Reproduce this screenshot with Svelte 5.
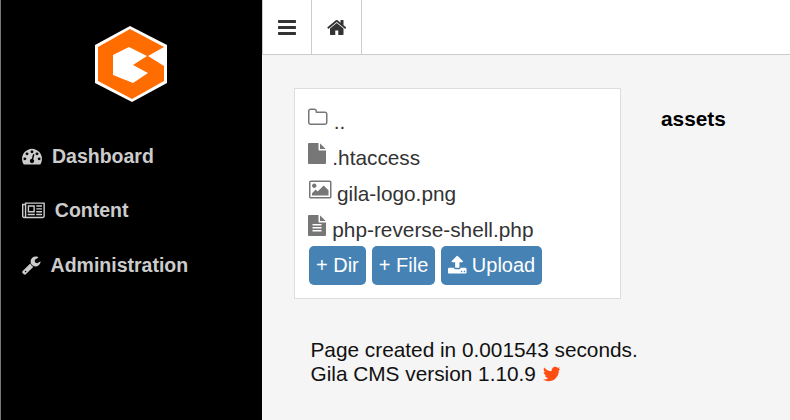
<script>
  const icons = {
    bars: 'M1664 1344v128q0 26-19 45t-45 19h-1408q-26 0-45-19t-19-45v-128q0-26 19-45t45-19h1408q26 0 45 19t19 45zm0-512v128q0 26-19 45t-45 19h-1408q-26 0-45-19t-19-45v-128q0-26 19-45t45-19h1408q26 0 45 19t19 45zm0-512v128q0 26-19 45t-45 19h-1408q-26 0-45-19t-19-45v-128q0-26 19-45t45-19h1408q26 0 45 19t19 45z',
    home: 'M1472 992v480q0 26-19 45t-45 19h-384v-384h-256v384h-384q-26 0-45-19t-19-45v-480q0-1 .5-3t.5-3l575-474 575 474q1 2 1 6zm223-69l-62 74q-8 9-21 11h-3q-13 0-21-7l-692-577-692 577q-12 8-24 7-13-2-21-11l-62-74q-8-10-7-23.5t11-21.5l719-599q32-26 76-26t76 26l244 204v-195q0-14 9-23t23-9h192q14 0 23 9t9 23v408l219 182q10 8 11 21.5t-7 23.5z',
    gauge: 'M384 1152q0-53-37.5-90.5t-90.5-37.5-90.5 37.5-37.5 90.5 37.5 90.5 90.5 37.5 90.5-37.5 37.5-90.5zm192-448q0-53-37.5-90.5t-90.5-37.5-90.5 37.5-37.5 90.5 37.5 90.5 90.5 37.5 90.5-37.5 37.5-90.5zm428 481l101-382q6-26-7.5-48.5t-38.5-29.5-48 6.5-30 39.5l-101 382q-60 5-107 43.5t-63 98.5q-20 77 20 146t117 89 146-20 89-117q16-60-6-117t-72-91zm660-33q0-53-37.5-90.5t-90.5-37.5-90.5 37.5-37.5 90.5 37.5 90.5 90.5 37.5 90.5-37.5 37.5-90.5zm-640-640q0-53-37.5-90.5t-90.5-37.5-90.5 37.5-37.5 90.5 37.5 90.5 90.5 37.5 90.5-37.5 37.5-90.5zm448 192q0-53-37.5-90.5t-90.5-37.5-90.5 37.5-37.5 90.5 37.5 90.5 90.5 37.5 90.5-37.5 37.5-90.5zm320 448q0 261-141 483-19 29-54 29h-1402q-35 0-54-29-141-221-141-483 0-182 71-348t191-286 286-191 348-71 348 71 286 191 191 286 71 348z',
    news: 'M1024 512h-384v384h384v-384zm128 640v128h-640v-128h640zm0-768v640h-640v-640h640zm640 768v128h-512v-128h512zm0-256v128h-512v-128h512zm0-256v128h-512v-128h512zm0-256v128h-512v-128h512zm-1536 960v-960h-128v960q0 26 19 45t45 19 45-19 19-45zm1664 0v-1088h-1536v1088q0 33-11 64h1483q26 0 45-19t19-45zm128-1216v1216q0 80-56 136t-136 56h-1664q-80 0-136-56t-56-136v-1088h256v-128h1792z',
    wrench: 'M448 1472q0-26-19-45t-45-19-45 19-19 45 19 45 45 19 45-19 19-45zm644-420l-682 682q-37 37-90 37-52 0-91-37l-106-108q-38-36-38-90 0-53 38-91l681-681q39 98 114.5 173.5t173.5 114.5zm634-435q0 39-23 106-47 134-164.5 217.5t-258.5 83.5q-185 0-316.5-131.5t-131.5-316.5 131.5-316.5 316.5-131.5q58 0 121.5 16.5t107.5 46.5q16 11 16 28t-16 28l-293 169v224l193 107q5-3 79-48.5t135.5-81 70.5-35.5q15 0 23.5 10t8.5 25z',
    folder: 'M1600 1312v-704q0-40-28-68t-68-28h-704q-40 0-68-28t-28-68v-64q0-40-28-68t-68-28h-320q-40 0-68 28t-28 68v960q0 40 28 68t68 28h1216q40 0 68-28t28-68zm128-704v704q0 92-66 158t-158 66h-1216q-92 0-158-66t-66-158v-960q0-92 66-158t158-66h320q92 0 158 66t66 158v32h672q92 0 158 66t66 158z',
    file: 'M1152 512v-472q22 14 36 28l408 408q14 14 28 36h-472zm-128 32q0 40 28 68t68 28h544v1056q0 40-28 68t-68 28h-1344q-40 0-68-28t-28-68v-1600q0-40 28-68t68-28h800v544z',
    image: 'M576 576q0 80-56 136t-136 56-136-56-56-136 56-136 136-56 136 56 56 136zm1024 384v448h-1408v-192l320-320 160 160 512-512zm96-704h-1600q-13 0-22.5 9.5t-9.5 22.5v1216q0 13 9.5 22.5t22.5 9.5h1600q13 0 22.5-9.5t9.5-22.5v-1216q0-13-9.5-22.5t-22.5-9.5zm160 32v1216q0 66-47 113t-113 47h-1600q-66 0-113-47t-47-113v-1216q0-66 47-113t113-47h1600q66 0 113 47t47 113z',
    filetext: 'M1596 476q14 14 28 36h-472v-472q22 14 36 28zm-476 164h544v1056q0 40-28 68t-68 28h-1344q-40 0-68-28t-28-68v-1600q0-40 28-68t68-28h800v544q0 40 28 68t68 28zm160 736v-64q0-14-9-23t-23-9h-704q-14 0-23 9t-9 23v64q0 14 9 23t23 9h704q14 0 23-9t9-23zm0-256v-64q0-14-9-23t-23-9h-704q-14 0-23 9t-9 23v64q0 14 9 23t23 9h704q14 0 23-9t9-23zm0-256v-64q0-14-9-23t-23-9h-704q-14 0-23 9t-9 23v64q0 14 9 23t23 9h704q14 0 23-9t9-23z',
    upload: 'M1344 1472q0-26-19-45t-45-19-45 19-19 45 19 45 45 19 45-19 19-45zm256 0q0-26-19-45t-45-19-45 19-19 45 19 45 45 19 45-19 19-45zm128-224v320q0 40-28 68t-68 28h-1472q-40 0-68-28t-28-68v-320q0-40 28-68t68-28h427q21 56 70.5 92t110.5 36h256q61 0 110.5-36t70.5-92h427q40 0 68 28t28 68zm-325-648q-17 40-59 40h-256v448q0 26-19 45t-45 19h-256q-26 0-45-19t-19-45v-448h-256q-42 0-59-40-17-39 14-69l448-448q18-19 45-19t45 19l448 448q31 30 14 69z',
    twitter: 'M1684 408q-67 98-162 167 1 14 1 42 0 130-38 259.5t-115.5 248.5-184.5 210.5-258 146-323 54.5q-271 0-496-145 35 4 76 4 225 0 401-138-105-2-188-64.5t-114-159.5q33 5 61 5 43 0 85-11-112-23-185.5-111.5t-73.5-205.5v-4q68 38 146 41-66-44-105-115t-39-154q0-88 44-163 121 149 294.5 238.5t371.5 99.5q-8-38-8-74 0-134 94.5-228.5t228.5-94.5q140 0 236 102 109-21 205-78-37 115-142 178 84-9 173-47z'
  };

  // horizontal extent of each glyph in font units, the height is always 1792
  const extent = {
    bars: [128, 1536],
    home: [64, 1664],
    gauge: [0, 1792],
    news: [0, 2048],
    wrench: [64, 1664],
    folder: [64, 1664],
    file: [128, 1536],
    image: [-64, 1920],
    filetext: [128, 1536],
    upload: [64, 1664],
    twitter: [108, 1576]
  };

  const menu = [
    { icon: 'gauge', label: 'Dashboard' },
    { icon: 'news', label: 'Content' },
    { icon: 'wrench', label: 'Administration' }
  ];

  const files = [
    { icon: 'folder', name: '..', cls: 'up' },
    { icon: 'file', name: '.htaccess', cls: '' },
    { icon: 'image', name: 'gila-logo.png', cls: 'pic' },
    { icon: 'filetext', name: 'php-reverse-shell.php', cls: '' }
  ];
</script>

{#snippet fa(name, size, cls)}
  <svg
    class={cls}
    width={(extent[name][1] * size) / 1792}
    height={size}
    viewBox="{extent[name][0]} 0 {extent[name][1]} 1792"
    fill="currentColor"
  >
    <path d={icons[name]} />
  </svg>
{/snippet}

<div class="page">
  <aside>
    <svg class="logo" width="74" height="78" viewBox="94 25 74 78">
      <polygon points="130,26 167,45 167,83 132,102 95,83 95,45" fill="#fff" />
      <polygon points="130,29 164,47 164,81 132,99 98,81 98,47" fill="#ff6c00" />
      <polygon points="113,55 129,47 147,56 133,65 148,73 133,83 113,75" fill="#fff" />
      <polygon points="148,56 164,47 164,66" fill="#fff" />
    </svg>
    <nav>
      {#each menu as m}
        <a href="#top" class="item">
          {@render fa(m.icon, 20, '')}
          <span>{m.label}</span>
        </a>
      {/each}
    </nav>
  </aside>

  <main>
    <header>
      <div class="cell">{@render fa('bars', 21, '')}</div>
      <div class="cell wide">{@render fa('home', 21, '')}</div>
    </header>

    <section class="content">
      <div class="browser">
        <div class="box">
          {#each files as f}
            <div class="row {f.cls}">
              {@render fa(f.icon, 21, 'file-icon')}
              <span>{f.name}</span>
            </div>
          {/each}
          <div class="actions">
            <button>+ Dir</button>
            <button>+ File</button>
            <button>{@render fa('upload', 20, 'up-icon')} Upload</button>
          </div>
        </div>
        <h2>assets</h2>
      </div>

      <footer>
        Page created in 0.001543 seconds.<br />
        <span class="version">Gila CMS version 1.10.9 {@render fa('twitter', 20, 'tw')}</span>
      </footer>
    </section>
  </main>
</div>

<style>
  :global(body) {
    margin: 0;
    background: #f5f5f5;
  }
  .page {
    display: flex;
    height: 420px;
    overflow: hidden;
    font-family: "Liberation Sans", Arial, sans-serif;
    font-size: 20.8px;
    color: #333;
  }
  svg {
    display: block;
    flex: none;
  }
  aside {
    flex: none;
    width: 262px;
    box-sizing: border-box;
    background: #000;
    border-left: 1px solid #777;
  }
  .logo {
    margin: 25px auto 0 93px;
  }
  nav {
    margin-top: 26px;
    display: flex;
    flex-direction: column;
  }
  .item {
    display: flex;
    align-items: center;
    height: 54.5px;
    padding-left: 21px;
    gap: 10px;
    color: #ccc;
    font-size: 19.5px;
    font-weight: bold;
    text-decoration: none;
  }
  main {
    flex: 1;
  }
  header {
    display: flex;
    height: 55px;
    box-sizing: border-box;
    background: #fff;
    border-bottom: 1px solid #ccc;
    border-left: 1px solid #ccc;
  }
  .cell {
    width: 48px;
    border-right: 1px solid #ccc;
    display: flex;
    align-items: center;
    justify-content: center;
  }
  .cell.wide {
    width: 49px;
  }
  .content {
    padding: 33px 0 0 32px;
  }
  .browser {
    display: flex;
    align-items: flex-start;
  }
  .box {
    width: 327px;
    height: 211px;
    box-sizing: border-box;
    background: #fff;
    border: 1px solid #ddd;
    padding: 13px 14px;
  }
  .row {
    display: flex;
    align-items: flex-end;
    gap: 6.3px;
    height: 36px;
    line-height: 23px;
  }
  .row span {
    margin-bottom: 1px;
  }
  .row.up {
    height: 32px;
  }
  .row.pic {
    gap: 5.5px;
  }
  .file-icon {
    color: #777;
    margin: 0 0 6px -1px;
  }
  .pic .file-icon {
    margin-left: 0;
  }
  .actions {
    display: flex;
    gap: 6px;
    margin-top: 4px;
  }
  button {
    display: flex;
    align-items: center;
    gap: 5px;
    height: 39px;
    padding: 0 7px;
    border: 0;
    border-radius: 5px;
    background: #4682b4;
    color: #fff;
    font: inherit;
    font-size: 20px;
  }
  .up-icon {
    margin-bottom: 2px;
  }
  h2 {
    margin: 19px 0 0 40px;
    font-size: 20.8px;
    line-height: 24px;
    color: #000;
  }
  footer {
    margin: 39px 0 0 16.5px;
    color: #111;
    line-height: 24px;
  }
  .version {
    display: flex;
    align-items: center;
    gap: 7px;
  }
  .tw {
    color: #ff4d12;
  }
</style>
